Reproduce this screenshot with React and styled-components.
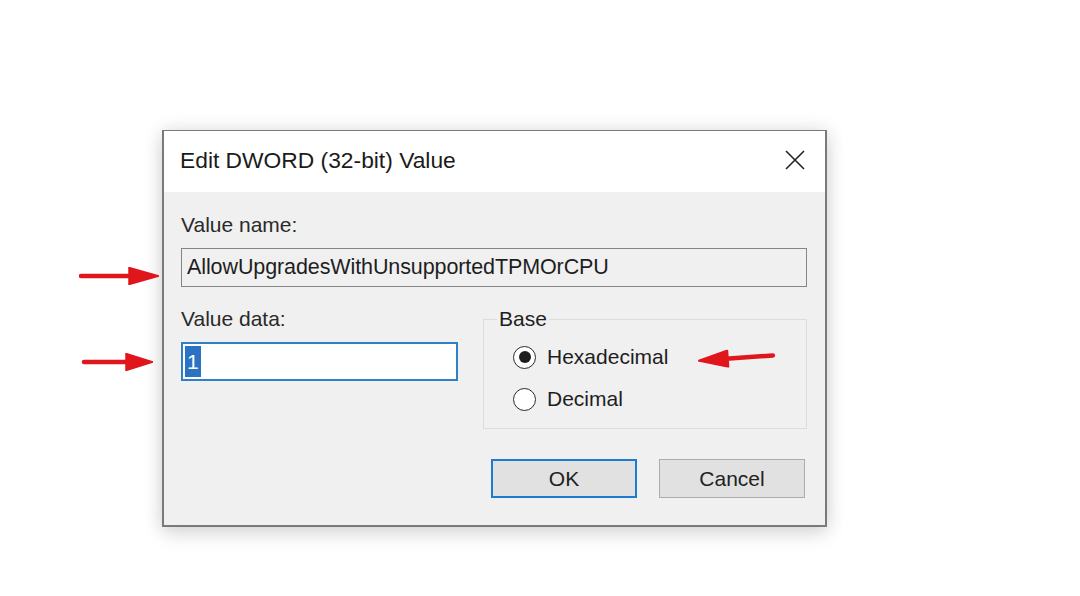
import React from "react";
import styled, { createGlobalStyle } from "styled-components";

const GlobalStyle = createGlobalStyle`
  html, body {
    margin: 0;
    padding: 0;
    background: #ffffff;
  }
  body {
    font-family: "Liberation Sans", Arial, sans-serif;
  }
`;

function Arrow({ dir = "right", length = 80, head = 30, tilt = 0, className }) {
  const h = 18;
  const mid = h / 2;
  const shaft =
    dir === "right"
      ? <line x1="3" y1={mid} x2={length - head + 2} y2={mid} stroke="#e0161c" strokeWidth="4.5" strokeLinecap="round" />
      : <line x1={head - 2} y1={mid} x2={length - 3} y2={mid} stroke="#e0161c" strokeWidth="4.5" strokeLinecap="round" />;
  const tip =
    dir === "right"
      ? `${length - head},0.5 ${length},${mid} ${length - head},${h - 0.5}`
      : `${head},0.5 0,${mid} ${head},${h - 0.5}`;
  return (
    <svg
      className={className}
      width={length}
      height={h}
      viewBox={`0 0 ${length} ${h}`}
      style={{ transform: `rotate(${tilt}deg)` }}
    >
      {shaft}
      <polygon points={tip} fill="#e0161c" stroke="#e0161c" strokeWidth="1.5" strokeLinejoin="round" />
    </svg>
  );
}

function CloseIcon() {
  return (
    <svg width="22" height="22" viewBox="0 0 22 22">
      <path d="M2 2 L20 20 M20 2 L2 20" stroke="#222" strokeWidth="1.6" fill="none" />
    </svg>
  );
}

export default function App() {
  return (
    <>
      <GlobalStyle />
      <Page>
        <Dialog>
          <TitleBar>
            <Title>Edit DWORD (32-bit) Value</Title>
            <CloseButton>
              <CloseIcon />
            </CloseButton>
          </TitleBar>
          <Body>
            <Label>Value name:</Label>
            <NameField>AllowUpgradesWithUnsupportedTPMOrCPU</NameField>
            <Row>
              <DataColumn>
                <Label>Value data:</Label>
                <DataField>
                  <Selected>1</Selected>
                </DataField>
              </DataColumn>
              <BaseGroup>
                <Legend>Base</Legend>
                <RadioList>
                  <RadioRow>
                    <Radio $checked />
                    <span>Hexadecimal</span>
                  </RadioRow>
                  <RadioRow>
                    <Radio />
                    <span>Decimal</span>
                  </RadioRow>
                </RadioList>
              </BaseGroup>
            </Row>
            <Buttons>
              <Button $primary>OK</Button>
              <Button>Cancel</Button>
            </Buttons>
          </Body>
        </Dialog>

        <NameArrow dir="right" length={81} head={30} />
        <DataArrow dir="right" length={72} head={27} />
        <BaseArrow dir="left" length={78} head={30} tilt={-4} />
      </Page>
    </>
  );
}

const Page = styled.div`
  position: relative;
  width: 1080px;
  height: 596px;
  padding: 130px 0 0 162px;
  box-sizing: border-box;
  background: #ffffff;
`;

const Dialog = styled.div`
  width: 665px;
  box-sizing: border-box;
  border: 1px solid #7a7a7a;
  border-width: 1px 2px 2px 2px;
  background: #f0f0f0;
  box-shadow: 0 0 18px rgba(0, 0, 0, 0.12), 0 8px 18px rgba(0, 0, 0, 0.1);
  color: #1e1e1e;
`;

const TitleBar = styled.div`
  height: 61px;
  background: #ffffff;
  display: flex;
  align-items: center;
  justify-content: space-between;
  padding: 0 19px 0 16px;
`;

const Title = styled.div`
  font-size: 22.8px;
  color: #1b1b1b;
  margin-top: -3px;
`;

const CloseButton = styled.div`
  display: flex;
  align-items: center;
  margin-top: -4px;
`;

const Body = styled.div`
  padding: 21px 18px 27px 17px;
  display: flex;
  flex-direction: column;
`;

const Label = styled.div`
  font-size: 21px;
  line-height: 24px;
  color: #2a2a2a;
`;

const NameField = styled.div`
  margin-top: 11px;
  height: 39px;
  box-sizing: border-box;
  border: 1px solid #858585;
  background: #f0f0f0;
  display: flex;
  align-items: center;
  padding-left: 5px;
  font-size: 21.5px;
  color: #1e1e1e;
  letter-spacing: -0.1px;
`;

const Row = styled.div`
  margin-top: 20px;
  display: flex;
  align-items: flex-start;
`;

const DataColumn = styled.div`
  width: 277px;
  display: flex;
  flex-direction: column;
`;

const DataField = styled.div`
  margin-top: 11px;
  height: 39px;
  box-sizing: border-box;
  border: 2px solid #2f80c6;
  background: #ffffff;
  display: flex;
  align-items: center;
  padding-left: 2px;
`;

const Selected = styled.span`
  background: #2b73c2;
  color: #ffffff;
  font-size: 21px;
  line-height: 31px;
  padding: 0 2px;
`;

const BaseGroup = styled.fieldset`
  margin: 0 0 0 auto;
  width: 324px;
  box-sizing: border-box;
  border: 1px solid #dcdcdc;
  padding: 11px 14px 14px 13px;
  min-width: 0;
`;

const Legend = styled.legend`
  font-size: 21px;
  line-height: 24px;
  padding: 0 2px;
  color: #1e1e1e;
`;

const RadioList = styled.div`
  padding-left: 16px;
  display: flex;
  flex-direction: column;
  gap: 12px;
`;

const RadioRow = styled.div`
  height: 30px;
  display: flex;
  align-items: center;
  gap: 11px;
  font-size: 21px;
  color: #1e1e1e;
`;

const Radio = styled.span`
  width: 23px;
  height: 23px;
  box-sizing: border-box;
  border-radius: 50%;
  border: 1.5px solid #2a2a2a;
  background: #ffffff;
  display: flex;
  align-items: center;
  justify-content: center;

  &::after {
    content: "";
    width: 12px;
    height: 12px;
    border-radius: 50%;
    background: ${(p) => (p.$checked ? "#1e1e1e" : "transparent")};
  }
`;

const Buttons = styled.div`
  margin-top: 30px;
  padding-right: 2px;
  display: flex;
  justify-content: flex-end;
  gap: 22px;
`;

const Button = styled.div`
  width: 146px;
  height: 39px;
  box-sizing: border-box;
  background: #e1e1e1;
  border: ${(p) => (p.$primary ? "2px solid #1f7bd0" : "1px solid #adadad")};
  display: flex;
  align-items: center;
  justify-content: center;
  font-size: 21px;
  color: #222222;
`;

const NameArrow = styled(Arrow)`
  position: absolute;
  left: 78px;
  top: 267px;
`;

const DataArrow = styled(Arrow)`
  position: absolute;
  left: 81px;
  top: 353px;
`;

const BaseArrow = styled(Arrow)`
  position: absolute;
  left: 698px;
  top: 349px;
`;
